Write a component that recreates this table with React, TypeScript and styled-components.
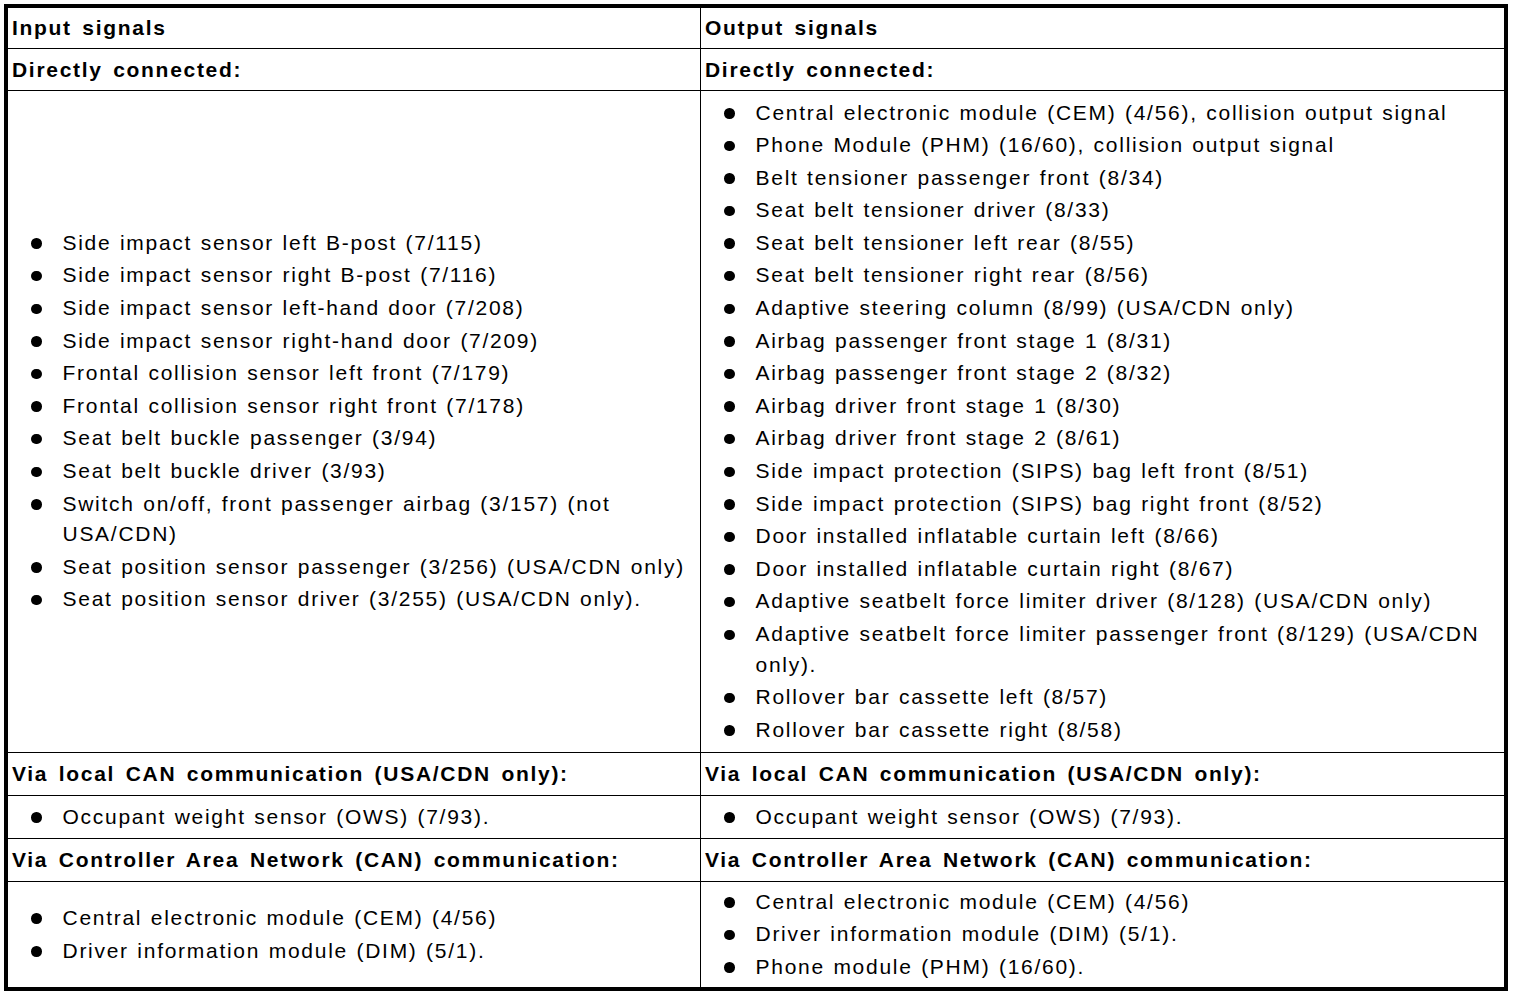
import React from "react";
import styled, { createGlobalStyle } from "styled-components";

const GlobalStyle = createGlobalStyle`
  html, body {
    margin: 0;
    padding: 0;
    background: #ffffff;
  }
  body {
    font-family: "Liberation Sans", Arial, Helvetica, sans-serif;
    color: #000000;
  }
  * { box-sizing: border-box; }
`;

const Page = styled.div`
  padding: 4px;
  width: 1520px;
`;

const Table = styled.div`
  width: 1504px;
  border: 4px solid #000;
  background: #000;
  display: grid;
  grid-template-columns: 692px 803px;
  gap: 1px;
`;

const HeadCell = styled.div<{ $h: number }>`
  background: #fff;
  height: ${(p) => p.$h}px;
  display: flex;
  align-items: center;
  padding: 0 5px 0 4px;
  font-size: 21px;
  font-weight: bold;
  letter-spacing: 1.7px;
  word-spacing: 3px;
  white-space: nowrap;
`;

const ListCell = styled.div<{ $pad: number }>`
  background: #fff;
  display: flex;
  flex-direction: column;
  justify-content: center;
  padding: ${(p) => p.$pad}px 4px ${(p) => p.$pad}px 23px;
`;

const List = styled.ul`
  list-style: none;
  margin: 0;
  padding: 0;
  display: flex;
  flex-direction: column;
  gap: 2.1px;
`;

const Item = styled.li`
  display: flex;
  align-items: flex-start;
  gap: 21px;
  font-size: 21px;
  line-height: 30.5px;
  letter-spacing: 1.72px;
  word-spacing: 1px;
`;

const Dot = styled.span`
  flex: none;
  width: 10.5px;
  height: 10.5px;
  margin-top: 10.5px;
  border-radius: 50%;
  background: #000;
`;

const Text = styled.span`
  flex: 1;
  min-width: 0;
`;

const Bullets: React.FC<{ items: string[] }> = ({ items }) => (
  <List>
    {items.map((t, i) => (
      <Item key={i}>
        <Dot />
        <Text>{t}</Text>
      </Item>
    ))}
  </List>
);

const inputDirect = [
  "Side impact sensor left B-post (7/115)",
  "Side impact sensor right B-post (7/116)",
  "Side impact sensor left-hand door (7/208)",
  "Side impact sensor right-hand door (7/209)",
  "Frontal collision sensor left front (7/179)",
  "Frontal collision sensor right front (7/178)",
  "Seat belt buckle passenger (3/94)",
  "Seat belt buckle driver (3/93)",
  "Switch on/off, front passenger airbag (3/157) (not USA/CDN)",
  "Seat position sensor passenger (3/256) (USA/CDN only)",
  "Seat position sensor driver (3/255) (USA/CDN only).",
];

const outputDirect = [
  "Central electronic module (CEM) (4/56), collision output signal",
  "Phone Module (PHM) (16/60), collision output signal",
  "Belt tensioner passenger front (8/34)",
  "Seat belt tensioner driver (8/33)",
  "Seat belt tensioner left rear (8/55)",
  "Seat belt tensioner right rear (8/56)",
  "Adaptive steering column (8/99) (USA/CDN only)",
  "Airbag passenger front stage 1 (8/31)",
  "Airbag passenger front stage 2 (8/32)",
  "Airbag driver front stage 1 (8/30)",
  "Airbag driver front stage 2 (8/61)",
  "Side impact protection (SIPS) bag left front (8/51)",
  "Side impact protection (SIPS) bag right front (8/52)",
  "Door installed inflatable curtain left (8/66)",
  "Door installed inflatable curtain right (8/67)",
  "Adaptive seatbelt force limiter driver (8/128) (USA/CDN only)",
  "Adaptive seatbelt force limiter passenger front (8/129) (USA/CDN only).",
  "Rollover bar cassette left (8/57)",
  "Rollover bar cassette right (8/58)",
];

const localCan = ["Occupant weight sensor (OWS) (7/93)."];

const inputCan = [
  "Central electronic module (CEM) (4/56)",
  "Driver information module (DIM) (5/1).",
];

const outputCan = [
  "Central electronic module (CEM) (4/56)",
  "Driver information module (DIM) (5/1).",
  "Phone module (PHM) (16/60).",
];

export default function App() {
  return (
    <>
      <GlobalStyle />
      <Page>
        <Table>
          <HeadCell $h={40}>Input signals</HeadCell>
          <HeadCell $h={40}>Output signals</HeadCell>

          <HeadCell $h={41}>Directly connected:</HeadCell>
          <HeadCell $h={41}>Directly connected:</HeadCell>

          <ListCell $pad={6.5}>
            <Bullets items={inputDirect} />
          </ListCell>
          <ListCell $pad={6.5}>
            <Bullets items={outputDirect} />
          </ListCell>

          <HeadCell $h={42}>Via local CAN communication (USA/CDN only):</HeadCell>
          <HeadCell $h={42}>Via local CAN communication (USA/CDN only):</HeadCell>

          <ListCell $pad={6}>
            <Bullets items={localCan} />
          </ListCell>
          <ListCell $pad={6}>
            <Bullets items={localCan} />
          </ListCell>

          <HeadCell $h={42}>Via Controller Area Network (CAN) communication:</HeadCell>
          <HeadCell $h={42}>Via Controller Area Network (CAN) communication:</HeadCell>

          <ListCell $pad={4.5}>
            <Bullets items={inputCan} />
          </ListCell>
          <ListCell $pad={4.5}>
            <Bullets items={outputCan} />
          </ListCell>
        </Table>
      </Page>
    </>
  );
}
